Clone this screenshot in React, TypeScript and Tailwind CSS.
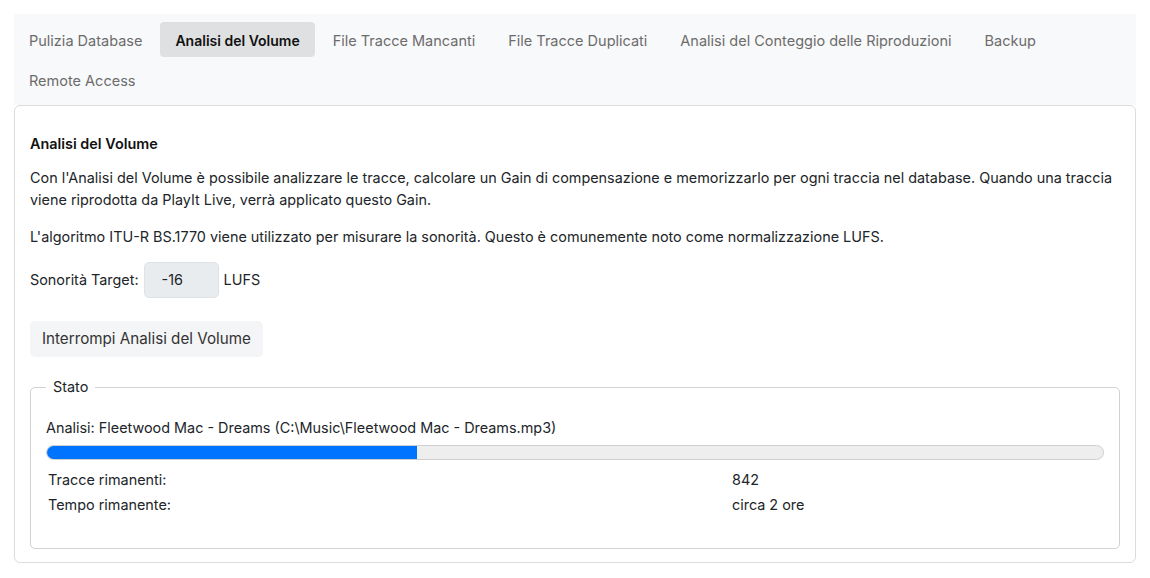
import React from 'react';

const tabs = [
  'Pulizia Database',
  'Analisi del Volume',
  'File Tracce Mancanti',
  'File Tracce Duplicati',
  'Analisi del Conteggio delle Riproduzioni',
  'Backup',
  'Remote Access',
];

function App() {
  const active = 'Analisi del Volume';
  const progress = 35;

  return (
    <div className="min-h-screen bg-white px-[14px] pt-[14px] text-[14.4px] text-[#212529] font-['Inter','Noto_Sans',sans-serif]">
      <div className="flex flex-wrap gap-x-[3px] gap-y-[5px] bg-[#f8f9fa] py-[8px]">
        {tabs.map((t) => (
          <button
            key={t}
            className={
              t === active
                ? 'h-[35px] rounded-[4px] bg-[#dfe0e1] px-[15px] pt-[2px] text-[14px] font-semibold text-[#111]'
                : 'h-[35px] rounded-[4px] px-[15px] pt-[2px] text-[14.5px] text-[#6c6c6c]'
            }
          >
            {t}
          </button>
        ))}
      </div>

      <div className="rounded-[6px] border border-[#dcdcdc] px-[15px] pb-[13px] pt-[28px]">
        <h4 className="leading-[20px] font-semibold text-[#111]">Analisi del Volume</h4>
        <p className="mt-[13px] leading-[22px]">
          Con l'Analisi del Volume è possibile analizzare le tracce, calcolare un Gain di compensazione e memorizzarlo per ogni traccia nel database. Quando una traccia viene riprodotta da PlayIt Live, verrà applicato questo Gain.
        </p>
        <p className="mt-[15px] leading-[22px]">
          L'algoritmo ITU-R BS.1770 viene utilizzato per misurare la sonorità. Questo è comunemente noto come normalizzazione LUFS.
        </p>

        <div className="mt-[14px] flex items-center gap-[5px]">
          <span>Sonorità Target:</span>
          <div className="flex h-[36px] w-[75px] items-center rounded-[5px] border border-[#dee2e6] bg-[#e9ecef] pl-[17px]">
            -16
          </div>
          <span>LUFS</span>
        </div>

        <button className="mt-[23px] h-[36px] rounded-[5px] bg-[#f4f5f7] px-[12px] text-[15.2px] text-[#333]">
          Interrompi Analisi del Volume
        </button>

        <fieldset className="mt-[20px] rounded-[5px] border border-[#d2d2d2] px-[15px] pb-[31px] pt-[21px]">
          <legend className="px-[7px] leading-[20px]">Stato</legend>
          <div className="leading-[20px]">
            Analisi: Fleetwood Mac - Dreams (C:\Music\Fleetwood Mac - Dreams.mp3)
          </div>
          <div className="mt-[7px] h-[15px] overflow-hidden rounded-full border border-[#cfcfcf] bg-[#eeeeee]">
            <div className="h-full bg-[#0074ff]" style={{ width: `${progress}%` }} />
          </div>
          <div className="mt-[7px] grid grid-cols-[684px_1fr] px-[2px] leading-[25px]">
            <div>Tracce rimanenti:</div>
            <div>842</div>
            <div>Tempo rimanente:</div>
            <div>circa 2 ore</div>
          </div>
        </fieldset>
      </div>
    </div>
  );
}

export default App;
